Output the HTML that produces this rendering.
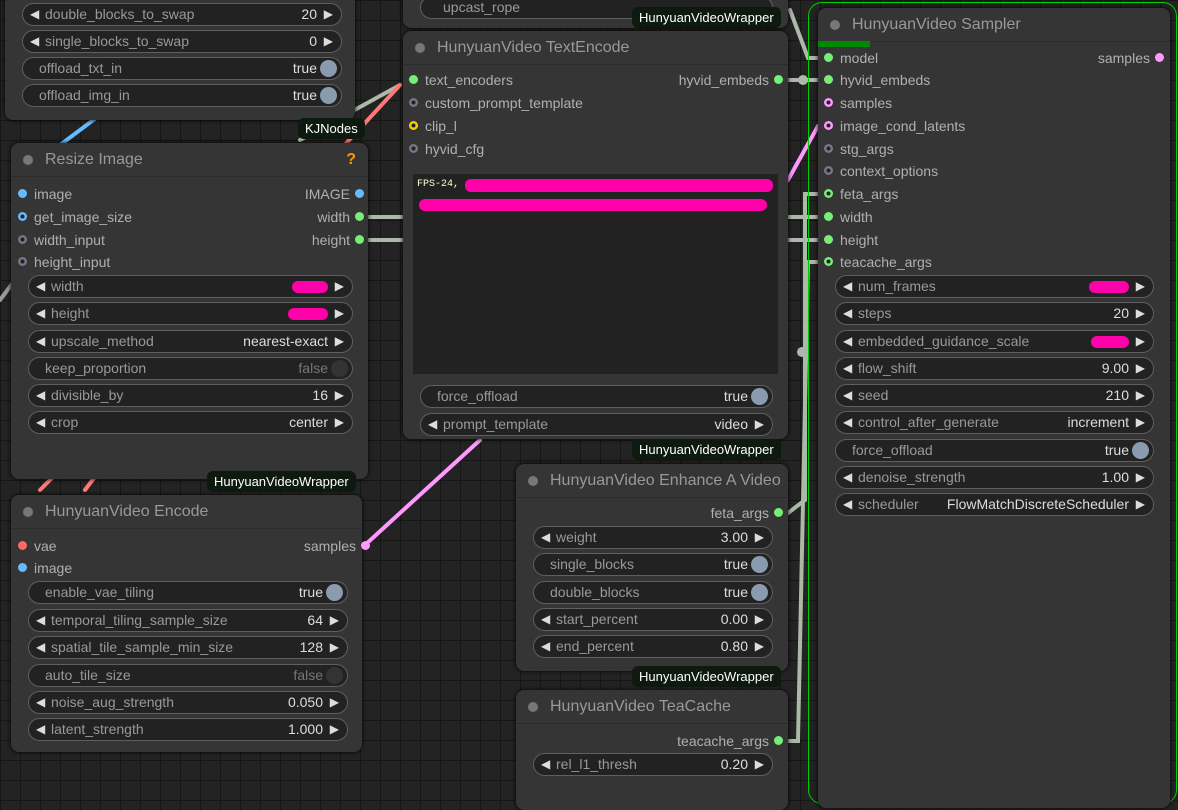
<!DOCTYPE html><html><head><style>
body{margin:0;width:1178px;height:791px;overflow:hidden;font-family:"Liberation Sans",sans-serif;position:relative;
background-image:linear-gradient(#161616 1px,transparent 1px),linear-gradient(90deg,#161616 1px,transparent 1px);background-size:20px 20px;background-color:#232323}
.n{position:absolute;background:#353535;border-radius:8px;box-shadow:0 0 4px #000}
.t{position:absolute;left:0;right:0;top:0;height:33px;border-bottom:1px solid #2c2c2c;color:#999;font-size:16px;line-height:33px;padding-left:34px}
.t:before{content:"";position:absolute;left:12px;top:12px;width:10px;height:10px;border-radius:50%;background:#777}
.w{position:absolute;height:21px;border:1px solid #5f5f5f;border-radius:12px;background:#222;color:#999;font-size:14px;line-height:21px;box-sizing:content-box}
.w .l{position:absolute;left:22px}.w .v{position:absolute;right:24px;color:#ddd}
.w .a1,.w .a2{position:absolute;color:#ddd;font-size:12px}.w .a1{left:7px}.w .a2{right:8px}
.w.b .l{left:16px}.w.b .v{right:24px}
.w.b:after{content:"";position:absolute;right:4px;top:2px;width:17px;height:17px;border-radius:50%;background:#8a9bb0}
.w.f:after{background:#333}.w.f .v{color:#777}
.s{position:absolute;font-size:14px;color:#b0b0b0;height:20px;line-height:20px}
.s i{position:absolute;top:5px;width:9px;height:9px;border-radius:50%}
.s.in{padding-left:16px}.s.in i{left:0}
.s.out{text-align:right;padding-right:14px}.s.out i{right:0}
.g{background:#7e7}.bl{background:#6bf}.pk{background:#f9f}.gy{background:#778}.ye{background:#fc0}.rd{background:#f66}
.r{box-shadow:inset 0 0 0 2.5px currentColor;background:#222!important}
.badge{position:absolute;background:#0e1a10;color:#fff;font-size:13px;border-radius:6px;padding:0 7px;height:21px;line-height:21px}
</style></head><body>
<svg width="1178" height="791" style="position:absolute;left:0;top:0">
<g fill="none" stroke-width="4" stroke-linecap="round">
<path d="M40 160 L120 100" stroke="#6bf"/><path d="M0 300 L30 260" stroke="#999"/>
<path d="M300 140 L400 85" stroke="#aab9a8"/><path d="M340 150 L400 85" stroke="#f77"/>
<path d="M368 217 L403 217 M368 240 L403 240" stroke="#aab9a8"/>
<path d="M788 217 L818 217 M788 240 L818 240 M788 80 L818 80" stroke="#aab9a8"/>
<path d="M365 545 L480 440" stroke="#f9f"/><path d="M788 180 L818 126" stroke="#f9f"/>
<path d="M788 513 L805 500 L805 194 L818 194" stroke="#aab9a8"/>
<path d="M788 741 L798 741 L808 262 L818 262" stroke="#aab9a8"/>
<path d="M790 10 L808 58 L818 58" stroke="#aab9a8"/>
<path d="M40 490 L60 470 M85 490 L100 470" stroke="#f77"/>
</g><circle cx="803" cy="80" r="5" fill="#aab9a8"/><circle cx="802" cy="352" r="5" fill="#aab9a8"/>
</svg>

<div class="n" style="left:5px;top:-20px;width:350px;height:140px"></div>
<div class="w" style="left:22px;top:3px;width:318px"><span class="a1">◀</span><span class="l">double_blocks_to_swap</span><span class="v">20</span><span class="a2">▶</span></div>
<div class="w" style="left:22px;top:30px;width:318px"><span class="a1">◀</span><span class="l">single_blocks_to_swap</span><span class="v">0</span><span class="a2">▶</span></div>
<div class="w b" style="left:22px;top:57px;width:318px"><span class="l">offload_txt_in</span><span class="v">true</span></div>
<div class="w b" style="left:22px;top:84px;width:318px"><span class="l">offload_img_in</span><span class="v">true</span></div>
<div class="badge" style="left:298px;top:118px">KJNodes</div>

<div class="n" style="left:11px;top:143px;width:357px;height:336px"><div class="t">Resize Image<span style="position:absolute;right:12px;color:#f90;font-weight:bold">?</span></div></div>
<div class="s in" style="left:18px;top:184px"><i class="bl"></i>image</div>
<div class="s in" style="left:18px;top:207px"><i class="bl r" style="color:#6bf"></i>get_image_size</div>
<div class="s in" style="left:18px;top:230px"><i class="gy r" style="color:#778"></i>width_input</div>
<div class="s in" style="left:18px;top:252px"><i class="gy r" style="color:#778"></i>height_input</div>
<div class="s out" style="right:814px;top:184px"><i class="bl"></i>IMAGE</div>
<div class="s out" style="right:814px;top:207px"><i class="g"></i>width</div>
<div class="s out" style="right:814px;top:230px"><i class="g"></i>height</div>
<div class="w" style="left:28px;top:275px;width:323px"><span class="a1">◀</span><span class="l">width</span><span class="v" style="width:36px;height:12px;top:5px;background:#f0a;border-radius:6px"></span><span class="a2">▶</span></div>
<div class="w" style="left:28px;top:302px;width:323px"><span class="a1">◀</span><span class="l">height</span><span class="v" style="width:40px;height:12px;top:5px;background:#f0a;border-radius:6px"></span><span class="a2">▶</span></div>
<div class="w" style="left:28px;top:330px;width:323px"><span class="a1">◀</span><span class="l">upscale_method</span><span class="v">nearest-exact</span><span class="a2">▶</span></div>
<div class="w b f" style="left:28px;top:357px;width:323px"><span class="l">keep_proportion</span><span class="v">false</span></div>
<div class="w" style="left:28px;top:384px;width:323px"><span class="a1">◀</span><span class="l">divisible_by</span><span class="v">16</span><span class="a2">▶</span></div>
<div class="w" style="left:28px;top:411px;width:323px"><span class="a1">◀</span><span class="l">crop</span><span class="v">center</span><span class="a2">▶</span></div>
<div class="badge" style="left:207px;top:471px">HunyuanVideoWrapper</div>

<div class="n" style="left:11px;top:495px;width:351px;height:257px"><div class="t">HunyuanVideo Encode</div></div>
<div class="s in" style="left:18px;top:536px"><i class="rd"></i>vae</div>
<div class="s in" style="left:18px;top:558px"><i class="bl"></i>image</div>
<div class="s out" style="right:808px;top:536px"><i class="pk"></i>samples</div>
<div class="w b" style="left:28px;top:581px;width:318px"><span class="l">enable_vae_tiling</span><span class="v">true</span></div>
<div class="w" style="left:28px;top:609px;width:318px"><span class="a1">◀</span><span class="l">temporal_tiling_sample_size</span><span class="v">64</span><span class="a2">▶</span></div>
<div class="w" style="left:28px;top:636px;width:318px"><span class="a1">◀</span><span class="l">spatial_tile_sample_min_size</span><span class="v">128</span><span class="a2">▶</span></div>
<div class="w b f" style="left:28px;top:664px;width:318px"><span class="l">auto_tile_size</span><span class="v">false</span></div>
<div class="w" style="left:28px;top:691px;width:318px"><span class="a1">◀</span><span class="l">noise_aug_strength</span><span class="v">0.050</span><span class="a2">▶</span></div>
<div class="w" style="left:28px;top:718px;width:318px"><span class="a1">◀</span><span class="l">latent_strength</span><span class="v">1.000</span><span class="a2">▶</span></div>

<div class="n" style="left:403px;top:-20px;width:385px;height:48px"></div>
<div class="w" style="left:420px;top:-4px;width:351px"><span class="l">upcast_rope</span></div>
<div class="badge" style="left:632px;top:7px">HunyuanVideoWrapper</div>

<div class="n" style="left:403px;top:31px;width:385px;height:408px"><div class="t">HunyuanVideo TextEncode</div>
<div style="position:absolute;left:10px;top:143px;width:365px;height:200px;background:#222">
<span style="position:absolute;left:4px;top:5px;color:#ffd;font:10px 'Liberation Mono',monospace">FPS-24,</span>
<div style="position:absolute;left:52px;top:5px;width:308px;height:13px;background:#f0a;border-radius:6px"></div>
<div style="position:absolute;left:6px;top:25px;width:348px;height:12px;background:#f0a;border-radius:6px"></div></div></div>
<div class="s in" style="left:409px;top:70px"><i class="g"></i>text_encoders</div>
<div class="s in" style="left:409px;top:93px"><i class="gy r" style="color:#778"></i>custom_prompt_template</div>
<div class="s in" style="left:409px;top:116px"><i class="ye r" style="color:#fc0"></i>clip_l</div>
<div class="s in" style="left:409px;top:139px"><i class="gy r" style="color:#778"></i>hyvid_cfg</div>
<div class="s out" style="right:395px;top:70px"><i class="g"></i>hyvid_embeds</div>
<div class="w b" style="left:420px;top:385px;width:351px"><span class="l">force_offload</span><span class="v">true</span></div>
<div class="w" style="left:420px;top:413px;width:351px"><span class="a1">◀</span><span class="l">prompt_template</span><span class="v">video</span><span class="a2">▶</span></div>
<div class="badge" style="left:632px;top:439px">HunyuanVideoWrapper</div>

<div class="n" style="left:516px;top:464px;width:272px;height:207px"><div class="t">HunyuanVideo Enhance A Video</div></div>
<div class="s out" style="right:395px;top:503px"><i class="g"></i>feta_args</div>
<div class="w" style="left:533px;top:526px;width:238px"><span class="a1">◀</span><span class="l">weight</span><span class="v">3.00</span><span class="a2">▶</span></div>
<div class="w b" style="left:533px;top:553px;width:238px"><span class="l">single_blocks</span><span class="v">true</span></div>
<div class="w b" style="left:533px;top:581px;width:238px"><span class="l">double_blocks</span><span class="v">true</span></div>
<div class="w" style="left:533px;top:608px;width:238px"><span class="a1">◀</span><span class="l">start_percent</span><span class="v">0.00</span><span class="a2">▶</span></div>
<div class="w" style="left:533px;top:635px;width:238px"><span class="a1">◀</span><span class="l">end_percent</span><span class="v">0.80</span><span class="a2">▶</span></div>
<div class="badge" style="left:632px;top:666px">HunyuanVideoWrapper</div>

<div class="n" style="left:516px;top:690px;width:272px;height:120px"><div class="t">HunyuanVideo TeaCache</div></div>
<div class="s out" style="right:395px;top:731px"><i class="g"></i>teacache_args</div>
<div class="w" style="left:533px;top:753px;width:238px"><span class="a1">◀</span><span class="l">rel_l1_thresh</span><span class="v">0.20</span><span class="a2">▶</span></div>

<div style="position:absolute;left:808px;top:2px;width:367px;height:800px;border:1.5px solid #0c0;border-radius:14px"></div>
<div class="n" style="left:818px;top:8px;width:352px;height:800px"><div class="t">HunyuanVideo Sampler</div>
<div style="position:absolute;left:0;top:33px;width:52px;height:6px;background:#080"></div></div>
<div class="s in" style="left:824px;top:48px"><i class="g"></i>model</div>
<div class="s in" style="left:824px;top:70px"><i class="g"></i>hyvid_embeds</div>
<div class="s in" style="left:824px;top:93px"><i class="pk r" style="color:#f9f"></i>samples</div>
<div class="s in" style="left:824px;top:116px"><i class="pk r" style="color:#f9f"></i>image_cond_latents</div>
<div class="s in" style="left:824px;top:139px"><i class="gy r" style="color:#778"></i>stg_args</div>
<div class="s in" style="left:824px;top:161px"><i class="gy r" style="color:#778"></i>context_options</div>
<div class="s in" style="left:824px;top:184px"><i class="g r" style="color:#7e7"></i>feta_args</div>
<div class="s in" style="left:824px;top:207px"><i class="g"></i>width</div>
<div class="s in" style="left:824px;top:230px"><i class="g"></i>height</div>
<div class="s in" style="left:824px;top:252px"><i class="g r" style="color:#7e7"></i>teacache_args</div>
<div class="s out" style="right:14px;top:48px"><i class="pk"></i>samples</div>
<div class="w" style="left:835px;top:275px;width:317px"><span class="a1">◀</span><span class="l">num_frames</span><span class="v" style="width:40px;height:12px;top:5px;background:#f0a;border-radius:6px"></span><span class="a2">▶</span></div>
<div class="w" style="left:835px;top:302px;width:317px"><span class="a1">◀</span><span class="l">steps</span><span class="v">20</span><span class="a2">▶</span></div>
<div class="w" style="left:835px;top:330px;width:317px"><span class="a1">◀</span><span class="l">embedded_guidance_scale</span><span class="v" style="width:38px;height:12px;top:5px;background:#f0a;border-radius:6px"></span><span class="a2">▶</span></div>
<div class="w" style="left:835px;top:357px;width:317px"><span class="a1">◀</span><span class="l">flow_shift</span><span class="v">9.00</span><span class="a2">▶</span></div>
<div class="w" style="left:835px;top:384px;width:317px"><span class="a1">◀</span><span class="l">seed</span><span class="v">210</span><span class="a2">▶</span></div>
<div class="w" style="left:835px;top:411px;width:317px"><span class="a1">◀</span><span class="l">control_after_generate</span><span class="v">increment</span><span class="a2">▶</span></div>
<div class="w b" style="left:835px;top:439px;width:317px"><span class="l">force_offload</span><span class="v">true</span></div>
<div class="w" style="left:835px;top:466px;width:317px"><span class="a1">◀</span><span class="l">denoise_strength</span><span class="v">1.00</span><span class="a2">▶</span></div>
<div class="w" style="left:835px;top:493px;width:317px"><span class="a1">◀</span><span class="l">scheduler</span><span class="v">FlowMatchDiscreteScheduler</span><span class="a2">▶</span></div>
</body></html>
